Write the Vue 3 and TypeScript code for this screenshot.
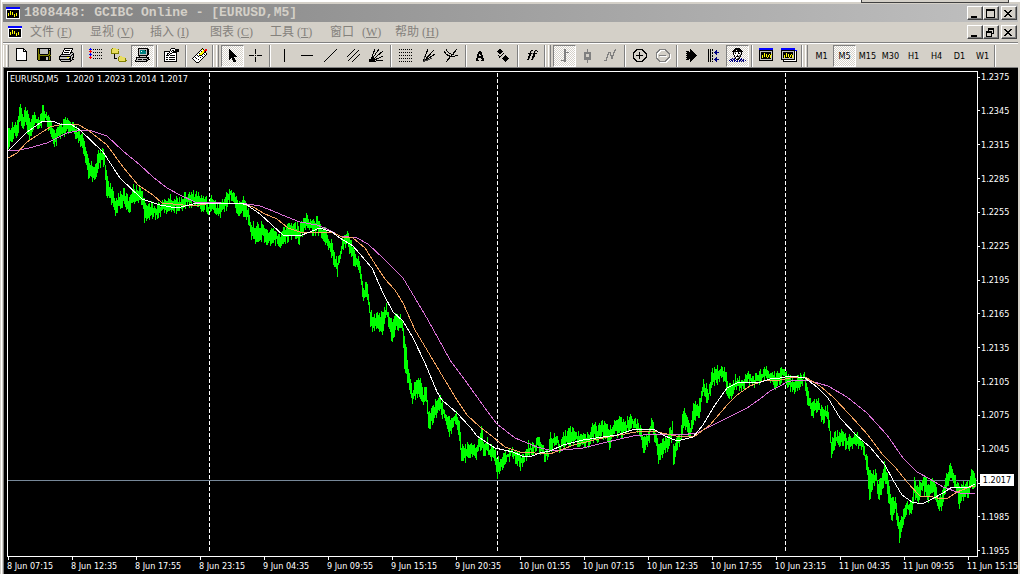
<script setup lang="ts">
type Point = [number, number]
type Band = [number, number, number]
interface Shape { d: string; fill?: string; stroke?: string }
interface Tool { id: string; label: string; pressed?: boolean }

const inks: Record<string, string> = {
  k: '#000000', g: '#808080', w: '#ffffff', y: '#ffff00', o: '#808000', s: '#e8dc60',
  b: '#0000ff', n: '#000080', r: '#ff0000', t: '#008080', l: '#c0c0c0', d: '#404040',
}

// Turns rows of ink letters into one path per ink; a dot leaves the pixel empty.
function pixels(rows: string[]): Shape[] {
  const paths: Record<string, string> = {}
  rows.forEach((row, y) => {
    let x = 0
    while (x < row.length) {
      const ink = row[x]
      let end = x + 1
      while (end < row.length && row[end] === ink) end++
      if (inks[ink]) paths[ink] = (paths[ink] ?? '') + `M${x} ${y}h${end - x}v1h${x - end}z`
      x = end
    }
  })
  return Object.entries(paths).map(([ink, d]) => ({ d, fill: inks[ink] }))
}

const line = (d: string, stroke = '#000000'): Shape => ({ d, stroke })

const icons: Record<string, Shape[]> = {
  create: pixels([
    '...kkkkkkkk......', '...kwwwwwwkk.....', '...kwwwwwwkwk....', '...kwwwwwwkkkk...', '...kwwwwwwwwwk...',
    '...kwwwwwwwwwk...', '...kwwwwwwwwwk...', '...kwwwwwwwwwk...', '...kwwwwwwwwwk...', '...kwwwwwwwwwk...',
    '...kwwwwwwwwwk...', '...kwwwwwwwwwk...', '...kkkkkkkkkkk...']),
  save: pixels([
    '.kkkkkkkkkkkkkk..', '.kokllllllllklk..', '.kokllllllllkkk..', '.kokllllllllkok..', '.kokllllllllkok..',
    '.kokllllllllkok..', '.kookkkkkkkkook..', '.koooooooooooko..', '.kookkkkkkkkkok..', '.kookkkkkkllkok..',
    '.kookkkkkkllkok..', '.kookkkkkkllkok..', '..kkkkkkkkkkkkk..']),
  print: pixels([
    '.....kkkkkkkkk...', '.....kwwwwwwwk...', '....kwkkkkkwk....', '....kwwwwwwwk....', '...kwkkkkkwkkk...',
    '...kwwwwwwwkllk..', '..kkkkkkkkkllkk..', '.kllllllllllklk..', 'kkkkkkkkkkkkllk..', 'klllllllyylklkk..',
    'klllllllllkklk...', 'kkkkkkkkkkkklkk..', '.klllllllllkk....', '..kkkkkkkkkk.....']),
  market: pixels([
    '..b..............', '.bbb.k.k.k.k.k...', '..r..............', '.rrr.............', '..r..k.k.k.k.k...',
    '..b..............', '.bbb.............', '..b..k.k.k.k.k...', '..r..............', '.rrr.............',
    '..r..k.k.k.k.k...']),
  navigator: pixels([
    '.osss............', 'osssssso.........', 'osssssss.........', 'osssssso.........', 'osssssso.........',
    'oooooooo.........', '...k.............', '...k.............', '...k....oss......', '...k...ossssss...',
    '...kkk.osssssso..', '.......osssssso..', '.......ossssssoo.', '........ooooooo..']),
  terminal: pixels([
    '....kkkkkkkkkk...', '....kllllllllkk..', '....kltttttklkk..', '....kltwttttlkk..', '....klttttttlkk..',
    '....klttttttlkk..', '....kllllllllkk..', '....kkkkkkkkkk...', '.....kllllllk....', '..kkkkkkkkkkkkk..',
    '..kllllllllllkk..', '..klkkkklkkkklkk.', '.kllllllllllkk...', '.kkkkkkkkkkkk....']),
  tester: pixels([
    '........kkkk.....', '.......kwwwwkkkk.', '.......kwkkwkkkk.', '.kkkkkkwkwkkkkkk.', '.kwwwwkwwkkkkk...',
    '.kwwkkwkkwwwwk...', '.kwwkwkwwwwwwk...', '.kwkkkwkkkkkwk...', '.kwwwwwwwwwwwk...', '.kwkkwkkkkkkwk...',
    '.kwwwwwwwwwwwk...', '.kwkkwkkkkkkwk...', '.kwwwwwwwwwwwk...', '.kkkkkkkkkkkkk...']),
  order: pixels([
    '..........k......', '.........kyk.rr..', '........kwwyrrr..', '.......kwkyyrk...', '......kwwyyykk...',
    '.....kwkyyykwwk..', '....kwwyyykwkwk..', '...kwkwkkkwwwk...', '..kwwwkwwwkwk....', '.kwkwwwwkwwk.....',
    'kwwwkwwwwwk......', '.kwwwwkwwk.......', '..kwwwwwk........', '...kwwwk.........', '....kkk..........']),
  cursor: pixels([
    '.................', '.....k...........', '.....kk..........', '.....kkk.........', '.....kkkk........',
    '.....kkkkk.......', '.....kkkkkk......', '.....kkkkkkk.....', '.....kkkkkkkk....', '.....kkkkk.......',
    '.....kk.kkk......', '.....k..kkk......', '.........kkk.....', '.........kkk.....']),
  crosshair: [line('M8.5 1v5M8.5 9v5M2 7.5h5M10 7.5h5M8 7.5h1')],
  vertical: [line('M8.5 1v13')],
  horizontal: [line('M2 7.5h12')],
  trend: [line('M2 14L15 1')],
  channel: [line('M2 9L10 1M3 13L14 2M7 14L15 6')],
  fan: [line('M2 14L7 1M2 14L11 1M2 14L15 3M2 14L15 8M2 14L15 12'), { d: 'M1 14V11H3V10H5V12H7V14z', fill: '#000000' }],
  retrace: pixels([
    '.................', '..k.k.k.k.k.k.k..', '.................', '.................', '..k.k.k.k.k.k.k..',
    '.................', '.................', '..k.k.k.k.k.k.k..', '.................', '.................',
    '..k.k.k.k.k.k.k..', '.................', '.................', '..k.k.k.k.k.k.k..']),
  fiboFan: [line('M3 14L8 1M3 14L14 2M3 14L15 6'), line('M3 14L12 10M4 13v-5', '#404040')],
  arcs: [line('M3 14L14 1M1 3c2 5 8 7 14 4M3 1c1 4 5 6 8 5')],
  text: pixels([
    '.................', '.................', '.................', '.......kk........', '......kkkk.......',
    '......kkkk.......', '.....kk.kk.......', '.....kk..kk......', '.....kkkkkk......', '.....kkkkkk......',
    '....kk...kkk.....', '....kk....kk.....', '....kkk..kkk.....']),
  arrows: pixels([
    '.................', '....kk...........', '...kkkk..........', '..kkkkkk.........', '...kkkk..........',
    '....kk..k........', '.......k.........', '...k..k...k......', '....kk...kkk.....', '....k...kkkkk....',
    '.......kkkkkkk...', '........kkkkk....', '.........kkk.....', '..........k......']),
  indicator: pixels([
    '.................', '.................', '.......kk..kk....', '......kg..kg.k...', '......k...k......',
    '....kkkkgkkkk....', '.....kk..kk......', '.....kk..kk......', '....kk..kkk......', '....kk..kk.......',
    '....kg..kg.......', '...kk..kk........']),
  bars: [line('M8.5 1v13M9.5 1v13M5 12.5h4M9 4.5h4', '#808080')],
  candles: [line('M8.5 1v4M8.5 12v3', '#808080'), { d: 'M5 4h7v8h-7zM7 6v3h3v-3z', fill: '#808080' }],
  lines: [line('M2 12h2v-3h1v-3h1v-2h2v3h1v3h1v-3h1v-3h1v-2h1v-1', '#808080')],
  zoomIn: [line('M6 1.5h5l4 4v4l-4 4h-5l-4-4v-4zM5 7.5h7M8.5 4v7')],
  zoomOut: [line('M7 2.5h5l4 4v4l-4 4h-5l-4-4v-4zM6 8.5h7', '#ffffff'), line('M6 1.5h5l4 4v4l-4 4h-5l-4-4v-4zM5 7.5h7', '#808080')],
  scroll: pixels([
    '.................', '.......k.........', '.......kk........', '...kkk.kkk.......',
    '....kkkkkkk......', '...kkkkkkkkk.....', '....kkkkkkkkk....', '...kkkkkkkkkkk...', '....kkkkkkkkk....',
    '...kkkkkkkkk.....', '....kkkkkkk......', '...kkk.kkk.......', '.......kk........', '.......k.........']),
  shift: pixels([
    '.................', '..k.k.k..........', '..k.k.k...n......', '..k.k....nn......', '..k.k.k.nnnnn....',
    '..k.k.k..nn......', '..k.k.....n......', '..k.k.k..........', '..k.k.k..........', '..k.k.....n......',
    '..k.k.k..nn......', '..k.k.k.nnnnn....', '..k.k....nn......', '..k.k.k...n......']),
  advisor: pixels([
    '......kkkkk......', '.....kkkkkkk.....', '....kkkwkkkkk....', '...kkkkkkkkkkk...', '....klgwwkwlk....',
    '....kwkwwkkwk....', '....kwwwlwwgk....', '.....kwwkwgk.....', '.....kwkkkgk.....', '......kwwlk......',
    '...n.nkwgkk.n....', '.nn.nn.kkk.nn.n..', 'n.nn.nn.n.nn.nn.n', '.n.n.n.nn.n.n.n..']),
  chartWindow: pixels([
    '.bbbbbbbbbbbbbb..', '.bbbbbbbbbbbbbb..', '.kkkkkkkkkkkkkk..', '.kllllllllllllk..', '.klkkkkkkkkkklk..',
    '.klkkkykkkkkklk..', '.klkkkykykkykyk..', '.klkykykykykylk..', '.klkykykykykylk..', '.klkykkkkykkylk..',
    '.klkkkkkkkkkklk..', '.kllllllllllllk..', '.kkkkkkkkkkkkkk..']),
  chartWindows: pixels([
    'bbbbbbbbbbbbbb...', 'bbbbbbbbbbbbbb...', 'kkkkkkkkkkkkkkbb.', 'kllllllllllllkwk.', 'klkkkkkkkkkklkwk.',
    'klkkkykkkkkklkwk.', 'klkkkykykkyklkwk.', 'klkykykykykylkwk.', 'klkykykykykylkwk.', 'klkykkkkykkylkwk.',
    'kllllllllllllkwk.', 'kkkkkkkkkkkkkkwk.', '..kwwwwwwwwwwwwk.', '..kkkkkkkkkkkkkk.']),
}

const logo = pixels([
  'bbbbbbbbbbbbbb', 'bbbbbbbbbbbbbb', 'wwwwwwwwwwwwww', 'wkkkkkkkkkkkkw', 'wkkkykkkkkkkkw', 'wkkkykykkkkkkw',
  'wkykykykkkykkw', 'wkykykykykykkw', 'wkykkkkkykykkw', 'wkkkkkkkykkkkw', 'wkkkkkkkkkkkkw', 'wwwwwwwwwwwwww'])

const glyphs: Record<string, string> = {
  minimize: 'M4 9h6v2h-6z',
  maximize: 'M3 2h9v9h-9zM4 4v6h7v-6z',
  restore: 'M5 2h6v6h-2v3h-6v-6h2zM6 4v1h3v2h1v-3zM4 7v3h4v-3z',
  close: 'M3 3h2v1h1v1h2v-1h1v-1h2v1h-1v1h-1v1h-1v1h1v1h1v1h1v1h-2v-1h-1v-1h-2v1h-1v1h-2v-1h1v-1h1v-1h1v-1h-1v-1h-1v-1h-1z',
}

const menus = [
  { name: '文件', key: 'F' }, { name: '显视', key: 'V' }, { name: '插入', key: 'I' }, { name: '图表', key: 'C' },
  { name: '工具', key: 'T' }, { name: '窗口', key: 'W', wide: true }, { name: '帮助', key: 'H' },
]

const t = (id: string, label: string, pressed = false): Tool => ({ id, label, pressed })
const toolbars: Tool[][][] = [
  [
    [t('create', 'New chart'), t('save', 'Save'), t('print', 'Print')],
    [t('market', 'Market watch'), t('navigator', 'Navigator'), t('terminal', 'Terminal', true)],
    [t('tester', 'Strategy tester')],
    [t('order', 'New order')],
  ],
  [
    [t('cursor', 'Cursor', true), t('crosshair', 'Crosshair')],
    [t('vertical', 'Vertical line'), t('horizontal', 'Horizontal line'), t('trend', 'Trendline'), t('channel', 'Channel'), t('fan', 'Gann fan')],
    [t('retrace', 'Fibonacci retracement'), t('fiboFan', 'Fibonacci fan'), t('arcs', 'Fibonacci arcs')],
    [t('text', 'Text'), t('arrows', 'Arrows')],
    [t('indicator', 'Indicators')],
  ],
  [
    [t('bars', 'Bar chart', true), t('candles', 'Candlesticks'), t('lines', 'Line chart')],
    [t('zoomIn', 'Zoom in'), t('zoomOut', 'Zoom out')],
    [t('scroll', 'Auto scroll'), t('shift', 'Chart shift'), t('advisor', 'Expert advisors', true)],
    [t('chartWindow', 'Chart window'), t('chartWindows', 'Tile windows')],
  ],
]
const periods = ['M1', 'M5', 'M15', 'M30', 'H1', 'H4', 'D1', 'W1']

const prices = Array.from({ length: 15 }, (_, i) => (1.2375 - i * 0.003).toFixed(4))
const times = [
  '8 Jun 07:15', '8 Jun 12:35', '8 Jun 17:55', '8 Jun 23:15', '9 Jun 04:35', '9 Jun 09:55', '9 Jun 15:15', '9 Jun 20:35',
  '10 Jun 01:55', '10 Jun 07:15', '10 Jun 12:35', '10 Jun 17:55', '10 Jun 23:15', '11 Jun 04:35', '11 Jun 09:55', '11 Jun 15:15',
]

// x, top and bottom of the traded range
const range: Band[] = [
  [8, 128, 145], [13, 122, 138], [17, 120, 134], [20, 101, 120], [23, 117, 128], [25, 107, 125], [29, 118, 138], [35, 113, 125],
  [39, 117, 127], [42, 104, 122], [45, 111, 120], [48, 117, 128], [52, 125, 138], [54, 130, 146], [57, 128, 140], [61, 125, 136],
  [66, 118, 132], [70, 122, 133], [75, 127, 135], [78, 130, 145], [82, 135, 145], [85, 147, 163], [88, 157, 177], [92, 165, 178],
  [94, 164, 183], [98, 153, 170], [101, 149, 162], [104, 152, 167], [106, 170, 198], [109, 182, 198], [112, 190, 205], [115, 200, 217],
  [118, 193, 208], [123, 190, 205], [129, 198, 213], [132, 187, 202], [138, 187, 200], [142, 188, 202], [144, 200, 223], [148, 202, 218],
  [153, 205, 217], [162, 202, 213], [168, 197, 210], [177, 198, 210], [187, 194, 205], [196, 192, 203], [201, 197, 210], [205, 195, 207],
  [208, 202, 214], [212, 195, 205], [217, 205, 217], [224, 198, 212], [230, 187, 198], [234, 193, 207], [238, 202, 214], [240, 200, 215],
  [243, 198, 213], [248, 207, 222], [251, 225, 240], [257, 222, 240], [259, 228, 245], [263, 220, 237], [266, 232, 245], [272, 228, 240],
  [277, 232, 243], [280, 237, 252], [283, 228, 242], [289, 223, 238], [294, 221, 237], [299, 228, 242], [302, 219, 233], [306, 214, 227],
  [312, 220, 233], [319, 217, 232], [322, 227, 243], [326, 227, 240], [328, 237, 250], [332, 240, 257], [334, 253, 268], [337, 258, 273],
  [340, 247, 260], [343, 235, 247], [347, 232, 245], [351, 240, 257], [355, 253, 268], [358, 257, 268], [361, 270, 288], [363, 290, 303],
  [366, 281, 297], [368, 290, 303], [370, 307, 327], [373, 315, 328], [378, 311, 328], [382, 315, 335], [386, 304, 317], [389, 313, 327],
  [392, 323, 342], [396, 312, 328], [402, 318, 330], [404, 335, 367], [407, 357, 380], [409, 373, 392], [412, 390, 405], [416, 376, 395],
  [420, 378, 397], [423, 392, 408], [426, 385, 400], [428, 407, 430], [431, 410, 425], [435, 402, 415], [439, 393, 410], [443, 405, 418],
  [449, 418, 433], [456, 412, 422], [459, 423, 442], [461, 443, 460], [467, 445, 460], [471, 440, 453], [476, 445, 459], [479, 437, 448],
  [481, 423, 447], [483, 441, 455], [487, 438, 450], [489, 446, 458], [494, 445, 458], [497, 457, 475], [501, 457, 470], [505, 452, 462],
  [512, 446, 455], [517, 453, 463], [520, 455, 468], [525, 452, 461], [528, 443, 455], [533, 445, 453], [537, 435, 448], [542, 447, 453],
  [545, 450, 461], [548, 450, 458], [550, 431, 450], [553, 437, 445], [556, 434, 443], [560, 442, 452], [564, 432, 445], [572, 427, 442],
  [577, 433, 443], [583, 435, 448], [588, 432, 445], [595, 418, 437], [597, 427, 443], [602, 419, 435], [607, 425, 440], [609, 428, 449],
  [613, 422, 435], [618, 418, 435], [625, 423, 435], [630, 411, 427], [635, 419, 428], [640, 426, 437], [643, 437, 455], [647, 433, 445],
  [652, 417, 430], [655, 430, 443], [658, 440, 460], [663, 440, 455], [667, 435, 448], [670, 428, 443], [672, 423, 437], [673, 443, 468],
  [676, 438, 450], [680, 433, 443], [683, 407, 425], [687, 417, 430], [690, 427, 440], [693, 403, 423], [695, 398, 418], [698, 405, 420],
  [701, 388, 403], [703, 380, 395], [708, 388, 402], [712, 369, 383], [716, 368, 382], [721, 365, 378], [725, 370, 385], [728, 383, 402],
  [732, 383, 395], [735, 376, 388], [740, 379, 390], [748, 372, 383], [753, 377, 387], [762, 369, 380], [770, 369, 380], [775, 375, 387],
  [783, 367, 378], [787, 376, 385], [793, 378, 394], [798, 377, 387], [804, 372, 380], [807, 387, 402], [812, 402, 415], [818, 398, 410],
  [822, 410, 422], [827, 407, 418], [829, 417, 430], [831, 440, 455], [835, 433, 445], [841, 431, 442], [848, 437, 449], [856, 433, 445],
  [862, 440, 450], [865, 450, 463], [867, 458, 473], [869, 473, 500], [873, 470, 483], [876, 472, 483], [878, 483, 503], [882, 475, 493],
  [884, 463, 478], [887, 475, 493], [891, 497, 520], [895, 497, 513], [899, 525, 539], [903, 510, 523], [907, 500, 513], [911, 500, 515],
  [914, 480, 497], [918, 483, 500], [923, 475, 490], [928, 483, 500], [932, 476, 490], [936, 488, 502], [938, 497, 512], [942, 490, 507],
  [946, 475, 488], [950, 461, 480], [953, 470, 483], [957, 483, 497], [959, 487, 508], [963, 482, 498], [968, 483, 497], [971, 471, 487],
  [975, 473, 485],
]

const noise = (n: number) => {
  const v = Math.sin(n * 12.9898) * 43758.5453
  return v - Math.floor(v)
}

let bars = ''
let at = 0
for (let x = 8; x <= 975; x++) {
  while (at < range.length - 2 && range[at + 1][0] <= x) at++
  const [x0, top0, bottom0] = range[at]
  const [x1, top1, bottom1] = range[at + 1]
  const f = (x - x0) / (x1 - x0)
  const top = Math.round(top0 + (top1 - top0) * f + noise(x) * 8 - 3)
  const bottom = Math.round(bottom0 + (bottom1 - bottom0) * f + noise(x + 900) * 8 - 4)
  bars += `M${x}.5 ${top}V${bottom}`
}

const toPath = (points: Point[]) => 'M' + points.map(p => p.join(' ')).join('L')
const averages = [
  { color: '#da70d6', d: toPath([[8, 151], [20, 150], [33, 147], [47, 143], [67, 133], [82, 130], [92, 131], [107, 136], [123, 151], [140, 165], [153, 177], [167, 188], [180, 195], [195, 202], [247, 204], [260, 206], [273, 211], [287, 217], [300, 222], [317, 225], [327, 229], [340, 236], [357, 238], [368, 244], [383, 258], [403, 278], [415, 298], [428, 320], [438, 338], [450, 360], [467, 383], [490, 415], [497, 424], [515, 438], [537, 447], [553, 451], [583, 448], [603, 443], [633, 436], [653, 434], [680, 435], [697, 433], [717, 423], [733, 415], [747, 408], [760, 399], [770, 391], [780, 386], [787, 382], [795, 380], [807, 380], [828, 386], [847, 397], [867, 413], [887, 435], [903, 458], [917, 472], [930, 479], [943, 487], [960, 493], [975, 493]]) },
  { color: '#f4a460', d: toPath([[8, 158], [17, 153], [27, 142], [50, 127], [63, 124], [77, 124], [88, 130], [107, 145], [123, 167], [138, 185], [153, 195], [162, 203], [183, 205], [200, 205], [213, 203], [240, 203], [253, 207], [265, 214], [277, 219], [288, 228], [303, 233], [332, 232], [342, 237], [353, 238], [365, 248], [377, 267], [385, 279], [395, 290], [403, 303], [415, 330], [430, 355], [443, 377], [457, 400], [467, 415], [480, 427], [493, 437], [505, 447], [520, 452], [550, 454], [563, 449], [577, 444], [603, 438], [630, 433], [643, 431], [653, 431], [667, 434], [680, 437], [695, 436], [710, 425], [727, 405], [737, 395], [750, 386], [763, 381], [780, 380], [795, 377], [807, 378], [820, 386], [833, 397], [850, 415], [868, 435], [883, 455], [895, 467], [907, 482], [920, 496], [933, 497], [942, 499], [948, 498], [957, 492], [967, 488], [975, 486]]) },
  { color: '#ffffff', d: toPath([[8, 151], [27, 132], [43, 121], [52, 121], [60, 124], [72, 125], [80, 130], [103, 152], [120, 178], [142, 199], [160, 205], [177, 208], [197, 203], [240, 203], [247, 205], [260, 214], [272, 225], [283, 235], [302, 235], [320, 228], [332, 232], [340, 238], [353, 246], [372, 268], [383, 293], [393, 312], [403, 321], [413, 338], [425, 363], [437, 392], [442, 400], [457, 413], [470, 427], [477, 436], [489, 444], [495, 448], [513, 452], [522, 456], [532, 456], [540, 453], [550, 451], [563, 445], [583, 440], [603, 437], [617, 435], [635, 429], [655, 430], [665, 436], [677, 441], [693, 437], [703, 425], [715, 405], [727, 388], [737, 383], [747, 382], [758, 383], [770, 379], [780, 378], [790, 376], [805, 378], [817, 387], [828, 398], [840, 418], [857, 436], [870, 447], [885, 465], [893, 480], [902, 495], [912, 502], [922, 504], [932, 499], [943, 493], [952, 487], [967, 488], [975, 484]]) },
]
</script>

<template>
  <div class="terminal">
    <div class="behind"></div>
    <header class="bar title">
      <svg class="logo" viewBox="0 0 14 12"><path v-for="s in logo" :key="s.fill" :d="s.d" :fill="s.fill" /></svg>
      <h1>1808448: GCIBC Online - [EURUSD,M5]</h1>
      <div class="controls">
        <button v-for="g in ['minimize', 'maximize', 'close']" :key="g" :class="g" :aria-label="g">
          <svg viewBox="0 0 15 13"><path :d="glyphs[g]" fill-rule="evenodd" /></svg>
        </button>
      </div>
    </header>
    <nav class="bar menu">
      <svg class="logo" viewBox="0 0 14 12"><path v-for="s in logo" :key="s.fill" :d="s.d" :fill="s.fill" /></svg>
      <div class="menu-items">
        <button v-for="m in menus" :key="m.key" :class="{ wide: m.wide }">
          <span>{{ m.name }}</span><span class="key">(<u>{{ m.key }}</u>)</span>
        </button>
      </div>
      <div class="controls">
        <button v-for="g in ['minimize', 'restore', 'close']" :key="g" :class="g" :aria-label="g + ' chart'">
          <svg viewBox="0 0 15 13"><path :d="glyphs[g]" fill-rule="evenodd" /></svg>
        </button>
      </div>
    </nav>

    <div class="toolbars">
      <div v-for="(bar, b) in toolbars" :key="b" class="toolbar" role="toolbar">
        <span class="grip"></span>
        <div v-for="(group, g) in bar" :key="g" class="group">
          <button v-for="tool in group" :key="tool.id" class="tool" :class="{ pressed: tool.pressed }" :aria-label="tool.label">
            <svg viewBox="0 0 17 16">
              <path v-for="(s, i) in icons[tool.id]" :key="i" :d="s.d" :fill="s.fill ?? 'none'" :stroke="s.stroke ?? 'none'" fill-rule="evenodd" />
            </svg>
          </button>
        </div>
      </div>
      <div class="toolbar" role="toolbar">
        <span class="grip"></span>
        <div class="group">
          <button v-for="p in periods" :key="p" class="tool period" :class="{ pressed: p === 'M5' }">{{ p }}</button>
        </div>
        <span class="end"></span>
      </div>
    </div>

    <main class="chart">
      <div class="plot">
        <svg viewBox="8 72 969 484" preserveAspectRatio="none">
          <path d="M8 480.5H977" stroke="#778899" />
          <path v-for="x in [209, 497, 785]" :key="x" :d="`M${x}.5 73V553`" stroke="#ffffff" stroke-dasharray="4 2" />
          <path :d="bars" stroke="#00ff00" />
          <path v-for="a in averages" :key="a.color" :d="a.d" :stroke="a.color" />
        </svg>
        <p class="quote"><span>EURUSD,M5</span><span>1.2020</span><span>1.2023</span><span>1.2014</span><span>1.2017</span></p>
      </div>
      <div class="prices">
        <span v-for="p in prices" :key="p" class="price">{{ p === '1.2015' ? '' : p }}</span>
        <strong class="current">1.2017</strong>
      </div>
      <div class="times">
        <span v-for="time in times" :key="time">{{ time }}</span>
      </div>
    </main>
  </div>
</template>

<style>
body { margin: 0; background: #d4d0c8; }
</style>

<style scoped>
* { box-sizing: border-box; }
button { margin: 0; padding: 0; border: 0; background: none; color: inherit; font: inherit; }
svg { display: block; shape-rendering: crispEdges; }
.terminal {
  position: relative;
  display: flex;
  flex-direction: column;
  height: 100vh;
  min-height: 320px;
  padding: 4px 2px 0 3px;
  overflow: hidden;
  background: #d4d0c8;
  box-shadow: inset 1px 0 0 #d4d0c8, inset 2px 2px 0 #ffffff;
}
.behind {
  position: absolute;
  top: 0;
  right: 11px;
  width: 148px;
  height: 3px;
  background: #d4d0c8;
  border: solid #404040;
  border-width: 0 1px 1px;
}
.bar { display: flex; align-items: center; flex: none; }
.title { height: 18px; padding-left: 3px; background: linear-gradient(90deg, #808080, #c0c0c0); }
.title h1 {
  margin: 0 0 0 4px;
  flex: 1;
  color: #d4d0c8;
  font: bold 13px/18px "Liberation Mono", monospace;
  white-space: nowrap;
}
.logo { width: 14px; height: 12px; flex: none; }
.menu { height: 20px; padding-left: 5px; }
.menu-items { display: flex; flex: 1; margin-left: 8px; }
.menu-items button {
  display: flex;
  align-items: center;
  gap: 3px;
  width: 60px;
  height: 20px;
  color: #84817c;
  font: 12px/20px "Liberation Sans", "Noto Sans CJK SC", sans-serif;
}
.menu-items .wide { width: 65px; gap: 8px; }
.key { font: 12px/20px "Liberation Serif", serif; }
.controls { display: flex; margin-right: 1px; }
.controls button {
  width: 16px;
  height: 14px;
  background: #d4d0c8;
  border: 1px solid;
  border-color: #ffffff #404040 #404040 #ffffff;
  box-shadow: inset -1px -1px 0 #808080;
}
.controls .close { margin-left: 2px; }
.controls svg { width: 15px; height: 13px; margin: -1px; }
.toolbars {
  display: flex;
  flex: none;
  height: 25px;
  border-top: 1px solid #808080;
  box-shadow: inset 0 1px 0 #ffffff;
  padding-top: 2px;
}
.toolbar { display: flex; }
.grip {
  width: 9px;
  height: 22px;
  border-left: 1px solid #808080;
  background: linear-gradient(90deg, #ffffff 1px, transparent 1px 3px, #ffffff 3px 4px, #d4d0c8 4px 5px, #808080 5px 6px, transparent 6px);
}
.toolbar:first-child .grip { width: 7px; border-left: 0; }
.end { width: 2px; background: linear-gradient(90deg, #808080 1px, #ffffff 1px); }
.group { display: flex; }
.group + .group { padding-left: 6px; background: linear-gradient(90deg, transparent 2px, #808080 2px 3px, #ffffff 3px 4px, transparent 4px) no-repeat; }
.tool { display: flex; align-items: center; justify-content: center; width: 23px; height: 22px; }
.tool svg { width: 17px; height: 16px; flex: none; }
.pressed {
  border: 1px solid;
  border-color: #808080 #ffffff #ffffff #808080;
  background: repeating-conic-gradient(#ffffff 0 25%, #d4d0c8 0 50%) 0 0 / 2px 2px;
}
.period { color: #000000; font: 9px/22px "DejaVu Sans Condensed", "DejaVu Sans", sans-serif; }
.chart {
  display: grid;
  flex: 1;
  min-height: 0;
  grid-template: 1fr 17px / 1fr 40px;
  padding: 3px 0 0 3px;
  overflow: hidden;
  background: #000000;
  border: solid #808080;
  border-width: 1px 0 0 1px;
  color: #ffffff;
  font: 9px/12px "DejaVu Sans Condensed", "DejaVu Sans", sans-serif;
}
.plot { position: relative; min-height: 0; border: 1px solid #ffffff; }
.plot svg { width: 100%; height: 100%; fill: none; }
.quote { position: absolute; top: 1px; left: 2px; display: flex; gap: 3px; margin: 0; white-space: nowrap; }
.quote span:first-child { margin-right: 4px; }
.prices { position: relative; display: flex; flex-direction: column; justify-content: space-between; }
.price {
  height: 12px;
  padding-left: 3px;
  background: linear-gradient(#ffffff, #ffffff) 0 50% / 2px 1px no-repeat;
}
.current {
  position: absolute;
  top: 83%;
  left: 2px;
  width: 34px;
  color: #000000;
  background: #ffffff;
  font-weight: normal;
  text-align: center;
}
.times { display: grid; grid-template-columns: repeat(16, 6.59%); min-width: 0; }
.times span {
  padding-top: 3px;
  white-space: nowrap;
  background: linear-gradient(#ffffff, #ffffff) 1px 0 / 1px 3px no-repeat;
}
</style>
